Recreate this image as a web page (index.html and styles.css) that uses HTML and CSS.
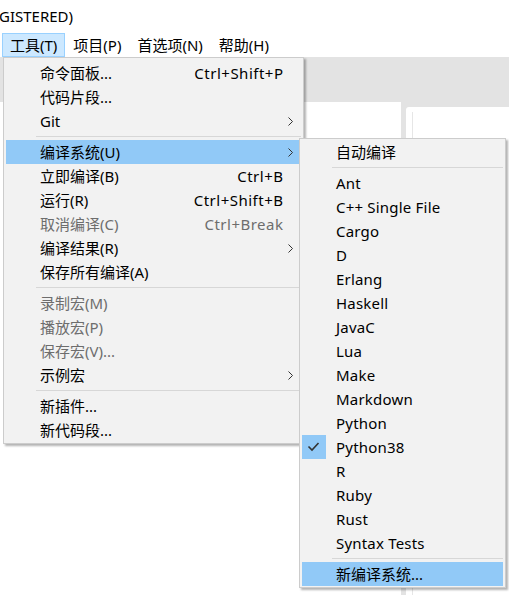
FILE: index.html
```html
<!DOCTYPE html>
<html lang="zh-CN">
<head>
  <meta charset="UTF-8">
  <title>工具菜单</title>
  <link rel="stylesheet" href="styles.css">
</head>
<body>
  <div class="window">
    <div class="titlebar">GISTERED)</div>

    <nav class="menubar">
      <span class="menubar-item active">工具(T)</span>
      <span class="menubar-item">项目(P)</span>
      <span class="menubar-item">首选项(N)</span>
      <span class="menubar-item">帮助(H)</span>
    </nav>

    <div class="workspace">
      <div class="pane pane-editor"></div>
      <div class="pane pane-side"><div class="pane-gutter"></div></div>
    </div>

    <!-- 工具 菜单 -->
    <div class="menu menu-tools">
      <div class="menu-item"><span></span><span class="label">命令面板...</span><span class="shortcut">Ctrl+Shift+P</span><span></span></div>
      <div class="menu-item"><span></span><span class="label">代码片段...</span><span></span><span></span></div>
      <div class="menu-item"><span></span><span class="label">Git</span><span></span><span class="arrow"><svg width="6" height="9" viewBox="0 0 6 9"><polyline points="0.5,0.5 4.5,4.5 0.5,8.5" /></svg></span></div>
      <div class="menu-sep"></div>
      <div class="menu-item hover"><span></span><span class="label">编译系统(U)</span><span></span><span class="arrow"><svg width="6" height="9" viewBox="0 0 6 9"><polyline points="0.5,0.5 4.5,4.5 0.5,8.5" /></svg></span></div>
      <div class="menu-item"><span></span><span class="label">立即编译(B)</span><span class="shortcut">Ctrl+B</span><span></span></div>
      <div class="menu-item"><span></span><span class="label">运行(R)</span><span class="shortcut">Ctrl+Shift+B</span><span></span></div>
      <div class="menu-item disabled"><span></span><span class="label">取消编译(C)</span><span class="shortcut">Ctrl+Break</span><span></span></div>
      <div class="menu-item"><span></span><span class="label">编译结果(R)</span><span></span><span class="arrow"><svg width="6" height="9" viewBox="0 0 6 9"><polyline points="0.5,0.5 4.5,4.5 0.5,8.5" /></svg></span></div>
      <div class="menu-item"><span></span><span class="label">保存所有编译(A)</span><span></span><span></span></div>
      <div class="menu-sep"></div>
      <div class="menu-item disabled"><span></span><span class="label">录制宏(M)</span><span></span><span></span></div>
      <div class="menu-item disabled"><span></span><span class="label">播放宏(P)</span><span></span><span></span></div>
      <div class="menu-item disabled"><span></span><span class="label">保存宏(V)...</span><span></span><span></span></div>
      <div class="menu-item"><span></span><span class="label">示例宏</span><span></span><span class="arrow"><svg width="6" height="9" viewBox="0 0 6 9"><polyline points="0.5,0.5 4.5,4.5 0.5,8.5" /></svg></span></div>
      <div class="menu-sep"></div>
      <div class="menu-item"><span></span><span class="label">新插件...</span><span></span><span></span></div>
      <div class="menu-item"><span></span><span class="label">新代码段...</span><span></span><span></span></div>
    </div>

    <!-- 编译系统 子菜单 -->
    <div class="menu menu-build">
      <div class="menu-item"><span></span><span class="label">自动编译</span></div>
      <div class="menu-sep"></div>
      <div class="menu-item"><span></span><span class="label latin">Ant</span></div>
      <div class="menu-item"><span></span><span class="label latin">C++ Single File</span></div>
      <div class="menu-item"><span></span><span class="label latin">Cargo</span></div>
      <div class="menu-item"><span></span><span class="label latin">D</span></div>
      <div class="menu-item"><span></span><span class="label latin">Erlang</span></div>
      <div class="menu-item"><span></span><span class="label latin">Haskell</span></div>
      <div class="menu-item"><span></span><span class="label latin">JavaC</span></div>
      <div class="menu-item"><span></span><span class="label latin">Lua</span></div>
      <div class="menu-item"><span></span><span class="label latin">Make</span></div>
      <div class="menu-item"><span></span><span class="label latin">Markdown</span></div>
      <div class="menu-item"><span></span><span class="label latin">Python</span></div>
      <div class="menu-item"><span class="check"><svg width="24" height="24" viewBox="0 0 24 24"><polyline points="6.5,11.5 10,15 16.5,8" /></svg></span><span class="label latin">Python38</span></div>
      <div class="menu-item"><span></span><span class="label latin">R</span></div>
      <div class="menu-item"><span></span><span class="label latin">Ruby</span></div>
      <div class="menu-item"><span></span><span class="label latin">Rust</span></div>
      <div class="menu-item"><span></span><span class="label latin">Syntax Tests</span></div>
      <div class="menu-sep"></div>
      <div class="menu-item hover"><span></span><span class="label">新编译系统...</span></div>
    </div>
  </div>
</body>
</html>
```

FILE: styles.css
```css
* { margin: 0; padding: 0; box-sizing: border-box; }
body {
  font-family: "Noto Sans", "Noto Sans CJK SC", sans-serif;
  font-size: 15px;
  color: #000;
  background: #fff;
}
.window {
  position: relative;
  width: 509px;
  height: 595px;
  overflow: hidden;
  display: flex;
  flex-direction: column;
}
.titlebar {
  height: 33px;
  line-height: 32px;
  margin-left: -1px;
}
.menubar {
  display: flex;
  height: 24px;
  padding-left: 2px;
}
.menubar-item {
  padding: 0 7px;
  line-height: 22px;
  border: 1px solid transparent;
}
.menubar-item.active {
  background: #cce8ff;
  border-color: #99d1ff;
}
.workspace {
  flex: 1;
  display: flex;
  background: #e3e3e3;
  padding-top: 45px;
}
.pane {
  background: #fff;
}
.pane-editor {
  width: 401px;
}
.pane-side {
  flex: 1;
  margin: 5px 0 0 5px;
  border-top-left-radius: 3px;
  padding: 5px 0 0 6px;
}
.pane-gutter {
  height: 100%;
  border-left: 1px solid #e6e6e6;
}

/* 菜单 */
.menu {
  position: absolute;
  background: #f2f2f2;
  border: 1px solid #ccc;
  box-shadow: 2px 2px 2px rgba(0, 0, 0, 0.3);
  padding: 3px 2px 1px;
}
.menu-tools {
  left: 3px;
  top: 57px;
  width: 301px;
}
.menu-build {
  left: 299px;
  top: 138px;
  width: 207px;
  padding-top: 1px;
}
.menu-item {
  display: grid;
  grid-template-columns: 34px 1fr auto 18px;
  height: 24px;
  line-height: 24px;
  align-items: center;
  white-space: nowrap;
}
.menu-build .menu-item {
  grid-template-columns: 34px 1fr;
}
.menu-item.hover {
  background: #91c9f7;
}
.menu-item.disabled {
  color: #6d6d6d;
}
.label.latin {
  letter-spacing: 0.2px;
}
.shortcut {
  text-align: right;
  letter-spacing: 0.5px;
  margin-right: -0.5px;
}
.arrow {
  display: flex;
  padding-left: 5px;
}
.arrow svg {
  fill: none;
  stroke: #333;
  stroke-width: 1;
}
.check {
  display: flex;
  width: 24px;
  height: 24px;
  background: #91c9f7;
}
.check svg {
  fill: none;
  stroke: #333;
  stroke-width: 1.6;
}
.menu-sep {
  height: 1px;
  margin: 3px 0 3px 30px;
  background: #d7d7d7;
}
```
